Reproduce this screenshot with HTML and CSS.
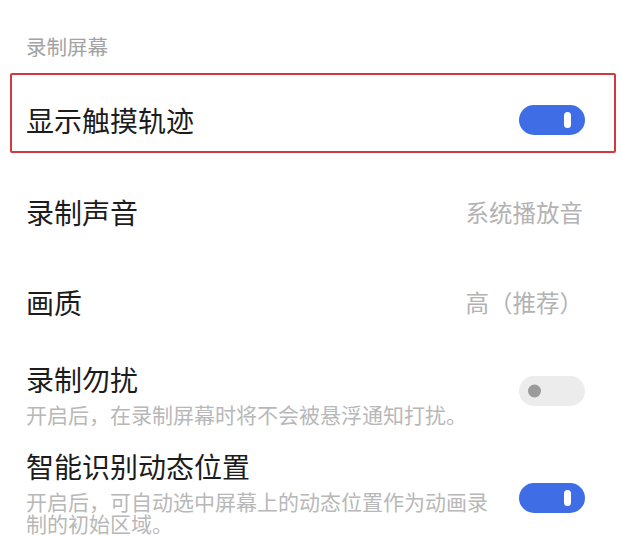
FILE: index.html
```html
<!DOCTYPE html>
<html lang="zh-CN">
<head>
    <meta charset="UTF-8">
    <meta name="viewport" content="width=device-width, initial-scale=1.0">
    <title>录制屏幕</title>
    <link rel="stylesheet" href="styles.css">
</head>
<body>

    <div class="settings">
        <div class="section-title">录制屏幕</div>

        <!-- highlighted row -->
        <div class="row row-highlight">
            <div class="row-label">显示触摸轨迹</div>
            <div class="switch on"><span class="knob"></span></div>
        </div>

        <div class="row">
            <div class="row-label">录制声音</div>
            <div class="row-value">系统播放音</div>
        </div>

        <div class="row">
            <div class="row-label">画质</div>
            <div class="row-value">高（推荐）</div>
        </div>

        <div class="row row-desc row-dnd">
            <div class="row-text">
                <div class="row-label">录制勿扰</div>
                <div class="row-sub">开启后，在录制屏幕时将不会被悬浮通知打扰。</div>
            </div>
            <div class="switch off"><span class="knob"></span></div>
        </div>

        <div class="row row-desc row-smart">
            <div class="row-text">
                <div class="row-label">智能识别动态位置</div>
                <div class="row-sub">开启后，可自动选中屏幕上的动态位置作为动画录制的初始区域。</div>
            </div>
            <div class="switch on"><span class="knob"></span></div>
        </div>
    </div>

</body>
</html>
```

FILE: styles.css
```css
body {
    font-family: "Noto Sans CJK SC", "Noto Sans", sans-serif;
    margin: 0;
    padding: 0;
    background: #fff;
    color: #1c1c1c;
    overflow: hidden;
}
.settings {
    padding: 0 37px 0 26px;
}
.section-title {
    padding-top: 34px;
    font-size: 20.5px;
    line-height: 24px;
    color: #a3a3a3;
    margin-bottom: 15px;
}
.row {
    display: flex;
    align-items: center;
    justify-content: space-between;
    height: 90px;
}
.row-label {
    font-size: 28px;
    line-height: 32px;
}
.row-value {
    font-size: 23.5px;
    line-height: 28px;
    color: #b3b3b3;
    margin-right: 2px;
}
.row-highlight {
    height: auto;
    margin: 0 -31px 14px -16px;
    padding: 29px 29px 15px 14px;
    border: 2px solid #d2393c;
    border-radius: 2px;
}
.row-desc {
    height: auto;
}
.row-dnd {
    padding: 16px 0 12px;
}
.row-smart {
    padding: 13px 0 10px;
}
.row-text {
    width: 466px;
}
.row-sub {
    margin-top: 8px;
    font-size: 21px;
    line-height: 22px;
    color: #b8b8b8;
}
.switch {
    position: relative;
    flex-shrink: 0;
    width: 66px;
    height: 30px;
    border-radius: 15px;
}
.switch.on {
    background: #3f6de6;
}
.switch.off {
    background: #ececec;
    margin-top: -6px;
}
.row-smart .switch {
    margin-top: 12px;
}
.switch .knob {
    position: absolute;
    top: 50%;
    transform: translateY(-50%);
}
.switch.on .knob {
    right: 14px;
    width: 7px;
    height: 16px;
    border-radius: 4px;
    background: #fff;
}
.switch.off .knob {
    left: 9px;
    width: 13px;
    height: 13px;
    border-radius: 50%;
    background: #9b9b9b;
}
```
